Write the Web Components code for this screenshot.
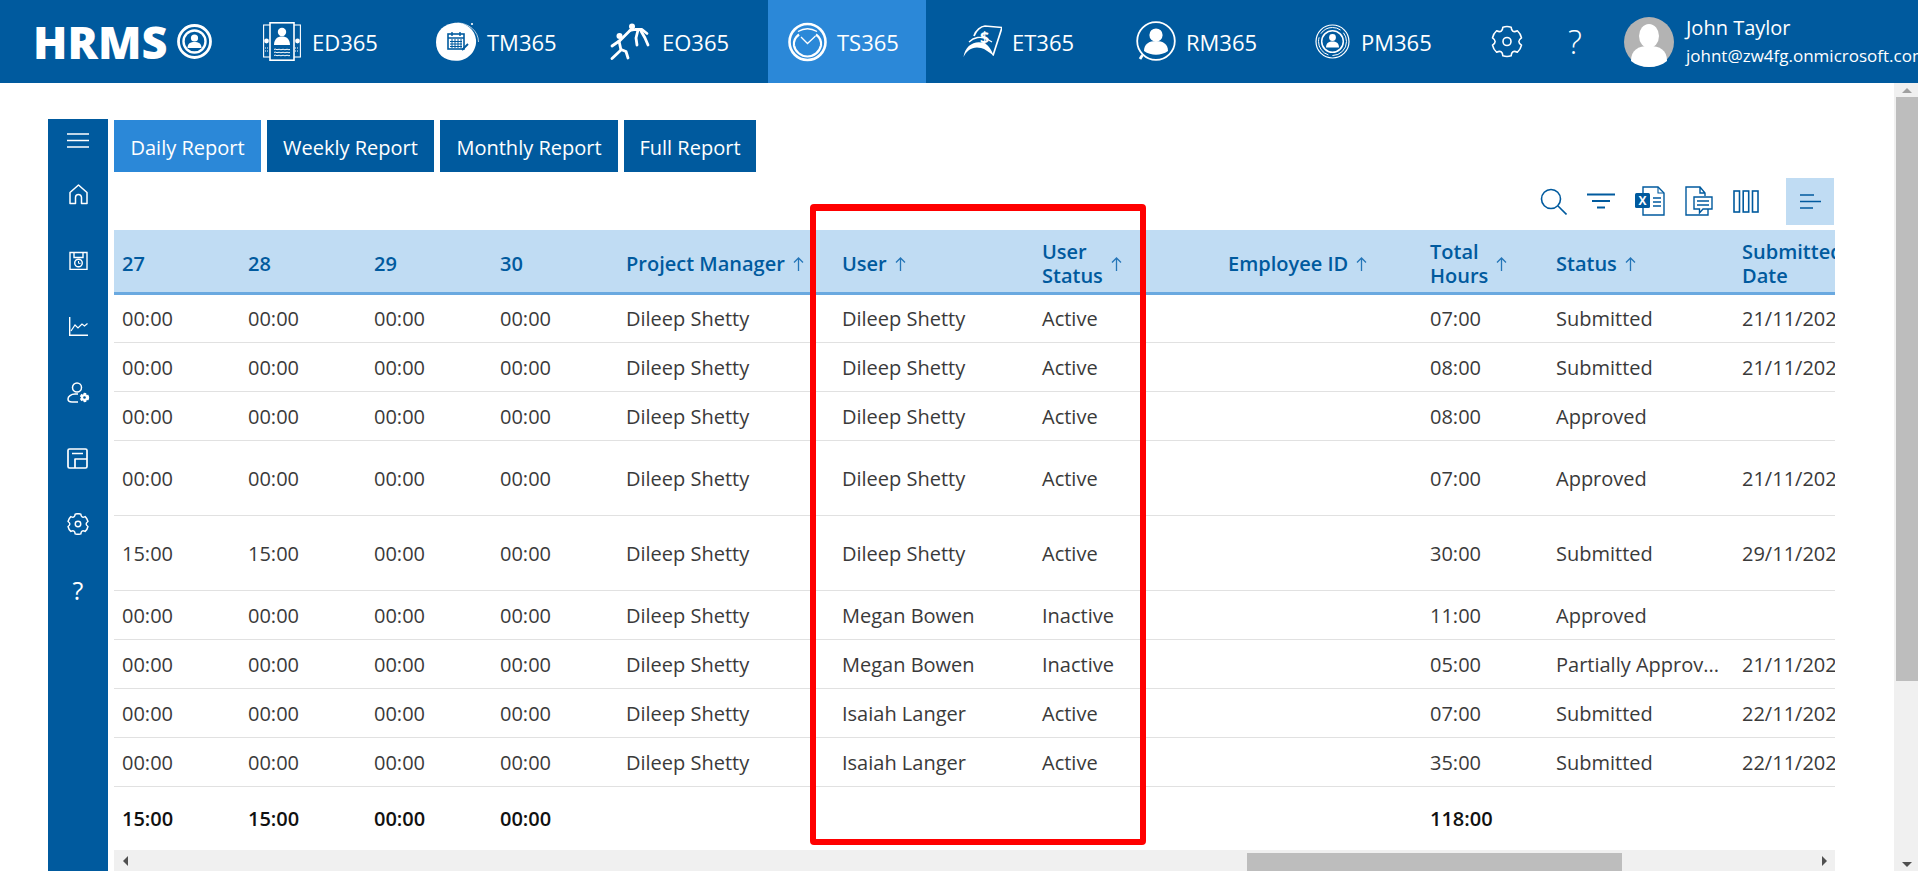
<!DOCTYPE html>
<html>
<head>
<meta charset="utf-8">
<title>HRMS TS365</title>
<style>
    html, body { margin: 0; height: 100%; overflow: hidden; background: #fff; font-family: "Open Sans", "Noto Sans", sans-serif; }
    body { display: flex; flex-direction: column; height: 871px; }
</style>
</head>
<body>
<hr-topbar></hr-topbar>
<hr-page></hr-page>

<script>
// six lobed cog, same outline in the top bar and in the rail
function gearPath() {
    const p = (deg, r) => {
        const a = deg * Math.PI / 180;
        return (12 + r * Math.cos(a)).toFixed(2) + ' ' + (12 + r * Math.sin(a)).toFixed(2);
    };
    let d = 'M' + p(-106, 11.2);
    for (let i = 0; i < 6; i++) {
        const a = i * 60 - 90;
        d += ' Q' + p(a, 11.8) + ' ' + p(a + 16, 11.2) + ' Q' + p(a + 30, 6.9) + ' ' + p(a + 44, 11.2);
    }
    return d + 'Z';
}
const gear = (size, sw) => `<svg width="${size}" height="${size}" viewBox="0 0 24 24" fill="none" stroke="#fff" stroke-width="${sw}" stroke-linejoin="round"><circle cx="12" cy="12" r="3"/><path d="${gearPath()}"/></svg>`;

const icons = {
    hrmsLogo: `<svg width="35" height="35" viewBox="0 0 35 35" fill="none" stroke="#fff"><circle cx="17.5" cy="17.5" r="16" stroke-width="2.8"/><circle cx="17.5" cy="17.5" r="11" stroke-width="2.4"/><circle cx="17.5" cy="14" r="3.6" fill="#fff" stroke="none"/><path d="M10.5 24c0-4.5 3-6 7-6s7 1.5 7 6z" fill="#fff" stroke="none"/></svg>`,
    ed: `<svg width="38" height="39" viewBox="0 0 38 39" fill="none" stroke="#fff"><rect x="0.6" y="3" width="36.8" height="32" stroke-width="1.1"/><circle cx="3.5" cy="19" r="2.4" fill="#fff" stroke="none"/><circle cx="34.5" cy="19" r="2.4" fill="#fff" stroke="none"/><path d="M2 26h4M2 29h4M32 26h4M32 29h4" stroke-width="1" stroke-dasharray="1 1"/><rect x="7" y="0.8" width="24" height="37.4" fill="#005a9e" stroke-width="1.6"/><circle cx="19" cy="10" r="4.2" fill="#fff" stroke="none"/><path d="M11 23c0-6 3.5-8.5 8-8.5s8 2.5 8 8.5z" fill="#fff" stroke="none"/><path d="M11 27.5c1.5-1.5 2.5 1 4 0s2.5 1 4 0 2.5 1 4 0 2.5 1 4 0M11 30.5c1.5-1.5 2.5 1 4 0s2.5 1 4 0 2.5 1 4 0 2.5 1 4 0M11 33.5c1.5-1.5 2.5 1 4 0s2.5 1 4 0 2.5 1 4 0 2.5 1 4 0" stroke-width="1"/></svg>`,
    tm: `<svg width="45" height="40" viewBox="0 0 45 40" fill="none"><path d="M20 .8c10-1 20 6 21 17s-8 21-20 21S1 32 1 20 10 2 20 .8z" fill="#fff"/><path d="M21 0c11 0 21 8 21 19" stroke="#fff" stroke-width=".7" transform="translate(1.5 1)"/><circle cx="37" cy="2" r="1.1" fill="#fff"/><g stroke="#005a9e"><rect x="13" y="12" width="16" height="15" stroke-width="1.6"/><path d="M13 16h16M17 10v4M25 10v4" stroke-width="1.4"/><path d="M15 19.5h12M15 22h12M15 24.5h12M17 17v9M20 17v9M23 17v9M26 17v9" stroke-width="1"/><path d="M27 28l6-6" stroke-width="1.8"/></g></svg>`,
    eo: `<svg width="41" height="37" viewBox="0 0 41 37" fill="none" stroke="#fff" stroke-width="2.8" stroke-linecap="round" stroke-linejoin="round"><circle cx="22" cy="3.5" r="3" fill="#fff" stroke="none"/><circle cx="9.5" cy="13" r="3" fill="#fff" stroke="none"/><path d="M20 7.5L10 17.5 2 23"/><path d="M9 18l2 9-9 8.5"/><path d="M11 26.5l5 2 2 6.5"/><path d="M20 7.5l5-1h7l5 4"/><path d="M28 7l-2 8 1 7"/><path d="M31 8l4 7 3 7"/></svg>`,
    ts: `<svg width="39" height="40" viewBox="0 0 39 40" fill="none" stroke="#fff"><circle cx="19.5" cy="20" r="18" stroke-width="2.6"/><path d="M11 12.5c-4 3-5.5 7-5 11 1 6 7 11 13.5 11s12-4.5 13.5-11c.5-4-1-8-5-11" stroke-width="2.2"/><path d="M10 9.5c6-3.5 13-3.5 19 0" stroke-width="1.4"/><path d="M13 15l6.5 6.5 8-7.5" stroke-width="1.3"/></svg>`,
    et: `<svg width="39" height="33" viewBox="0 0 39 33" fill="none" stroke="#fff"><path d="M11 11C13 5 18 1.5 22 1l17 1.5-9 28" stroke-width="1.7"/><text x="17" y="18" font-family="'Open Sans',sans-serif" font-size="16" font-weight="700" fill="#fff" stroke="none">$</text><path d="M.5 32C2 20 12 15 21 18c4 1.5 7 6 10 13-5-4-9-7-13-8-8-2-14 2-17.5 9z" fill="#fff" stroke="none"/><path d="M6 17c5-5 12-6 18-3l5 3" stroke-width="1.3"/></svg>`,
    rm: `<svg width="40" height="41" viewBox="0 0 40 41" fill="none" stroke="#fff"><circle cx="20" cy="20" r="18.8" stroke-width="1.8"/><circle cx="20" cy="14" r="6.6" fill="#fff" stroke="none"/><path d="M8 30c0-7 5-10 12-10s12 3 12 10c-7 5-17 5-24 0z" fill="#fff" stroke="none"/><path d="M6.5 34l-2.5 4" stroke-width="2.8"/></svg>`,
    pm: `<svg width="35" height="35" viewBox="0 0 35 35" fill="none" stroke="#fff"><circle cx="17.5" cy="17.5" r="16.5" stroke-width="1.2"/><circle cx="17.5" cy="17.5" r="14" stroke-width="1" stroke-dasharray="22 4"/><circle cx="17.5" cy="17.5" r="10.8" stroke-width="1.5"/><circle cx="17.5" cy="13.5" r="3.4" fill="#fff" stroke="none"/><path d="M11 23.5c0-4.5 3-6 6.5-6s6.5 1.5 6.5 6z" fill="#fff" stroke="none"/></svg>`,
    burger: `<svg width="22" height="15" viewBox="0 0 22 15" fill="none" stroke="#fff" stroke-width="1.3"><path d="M0 1h22M0 7.5h22M0 14h22"/></svg>`,
    home: `<svg width="19" height="21" viewBox="0 0 19 21" fill="none" stroke="#fff" stroke-width="1.5" stroke-linejoin="round"><path d="M1 19.5V8.5L9.5 1 18 8.5v11h-5.5v-6a3 3 0 0 0-6 0v6z"/></svg>`,
    report: `<svg width="19" height="19" viewBox="0 0 19 19" fill="none" stroke="#fff" stroke-width="1.4"><path d="M1 1.5h17v17H1z"/><path d="M5 1.5v5h9v-5"/><circle cx="9.5" cy="12" r="3.8"/><path d="M9.5 10v2.3h2" stroke-width="1"/></svg>`,
    chart: `<svg width="19" height="19" viewBox="0 0 19 19" fill="none" stroke="#fff" stroke-width="1.4"><path d="M.7 0v18.2H19"/><path d="M2 14l4-6 3 3 4-4 2.5 2 3-2.5" stroke-width="1.2"/></svg>`,
    userCog: `<svg width="23" height="21" viewBox="0 0 23 21" fill="none" stroke="#fff" stroke-width="1.5"><circle cx="10" cy="5.5" r="4.5"/><path d="M11 20H5c-2.5 0-4-1-4-3 0-2.5 3-5 7-5h3"/><circle cx="17.5" cy="15.5" r="3.6" fill="#fff" stroke="#fff" stroke-width="2.2" stroke-dasharray="2.5 1.4"/><circle cx="17.5" cy="15.5" r="1.3" fill="#005a9e" stroke="none"/></svg>`,
    panel: `<svg width="22" height="21" viewBox="0 0 22 21" fill="none" stroke="#fff" stroke-width="1.7" stroke-linejoin="round"><path d="M20 11V2.5A1.5 1.5 0 0 0 18.5 1H2.5A1.5 1.5 0 0 0 1 2.5v16A1.5 1.5 0 0 0 2.5 20h16a1.5 1.5 0 0 0 1.5-1.5V11H8v9M5 5.5h11"/></svg>`,
    search: `<svg width="27" height="27" viewBox="0 0 27 27" fill="none" stroke="#005a9e" stroke-width="1.6"><circle cx="11" cy="11" r="9.5"/><path d="M18 18l8.5 8.5"/></svg>`,
    filter: `<svg width="28" height="16" viewBox="0 0 28 16" fill="none" stroke="#005a9e" stroke-width="2"><path d="M0 1.5h28M5 8h18M10 14.5h8"/></svg>`,
    excel: `<svg width="30" height="30" viewBox="0 0 30 30" fill="none"><path d="M8 1h15l6 6v22H8z" fill="#fff" stroke="#005a9e" stroke-width="1.4"/><path d="M23 1v6h6" stroke="#005a9e" stroke-width="1.1"/><path d="M18 12h8M18 16h8M18 20h8" stroke="#005a9e" stroke-width="1.4"/><rect x="0" y="7" width="15" height="15" rx="1.5" fill="#005a9e"/><text x="3.4" y="19" font-family="'Open Sans',sans-serif" font-size="12" font-weight="700" fill="#fff">X</text></svg>`,
    comment: `<svg width="28" height="30" viewBox="0 0 28 30" fill="none" stroke="#005a9e" stroke-width="1.4"><path d="M14 29H1V1h14l5 6v3M15 1v6h5M23 23v6h-9"/><path d="M9 11h18v12h-9l-3.5 4v-4H9z" fill="#fff"/><path d="M12 15h12M12 19h12" stroke-width="1.6"/></svg>`,
    columns: `<svg width="26" height="23" viewBox="0 0 26 23" fill="none" stroke="#005a9e" stroke-width="1.6"><rect x="1" y="1" width="5.5" height="21"/><rect x="10.2" y="1" width="5.5" height="21"/><rect x="19.5" y="1" width="5.5" height="21"/></svg>`,
    align: `<svg width="21" height="15" viewBox="0 0 21 15" fill="none" stroke="#005a9e" stroke-width="1.4"><path d="M0 1h14M0 7.5h21M0 14h13"/></svg>`,
    avatar: `<svg width="50" height="50" viewBox="0 0 50 50"><circle cx="25" cy="25" r="25" fill="#b3b3b3"/><ellipse cx="25" cy="19" rx="10" ry="12" fill="#fff"/><path d="M7 44c0-11 7-15 18-15s18 4 18 15c-5 4-11 6-18 6s-13-2-18-6z" fill="#fff"/></svg>`,
    sort: `<svg width="11" height="14" viewBox="0 0 11 14" fill="none" stroke="#2576b8" stroke-width="1.3"><path d="M5.5 14V1M1 5.5L5.5 1 10 5.5"/></svg>`
};

// top bar
class HrTopbar extends HTMLElement {
    connectedCallback() {
        // icon, label, box width, offset of the label from the box start
        const mods = [
            ['ed', 'ED365', 172, 49], ['tm', 'TM365', 175, 52], ['eo', 'EO365', 158, 52],
            ['ts', 'TS365', 158, 49, true], ['et', 'ET365', 173, 49], ['rm', 'RM365', 179, 50], ['pm', 'PM365', 176, 46]
        ];
        this.attachShadow({ mode: 'open' }).innerHTML = `
            <style>
                :host { display: flex; align-items: stretch; height: 83px; background: #005a9e; color: #fff; flex: none; overflow: hidden; }
                .logo { display: flex; align-items: center; gap: 10px; padding-left: 33px; width: 263px; box-sizing: border-box; font: 800 45px/1 "Open Sans", sans-serif; flex: none; }
                a { display: flex; align-items: center; font-size: 22px; flex: none; box-sizing: border-box; }
                a.on { background: #2b88d8; padding-left: 20px; margin-right: 37px; }
                a b { display: flex; align-items: center; font-weight: 400; flex: none; }
                .tool { display: flex; align-items: center; justify-content: center; flex: none; }
                .user { display: flex; align-items: center; gap: 12px; margin-left: 42px; white-space: nowrap; flex: none; }
                .name { font-size: 20px; line-height: 28px; }
                .mail { font-size: 17px; line-height: 28px; }
            </style>
            <div class="logo">HRMS${icons.hrmsLogo}</div>
            ${mods.map(m => `<a class="${m[4] ? 'on' : ''}" style="width:${m[2]}px"><b style="width:${m[3]}px">${icons[m[0]]}</b><span>${m[1]}</span></a>`).join('')}
            <div class="tool" style="width:32px">${gear(33, 1.2)}</div>
            <div class="tool" style="width:14px;margin-left:45px;font-size:33px;font-weight:300">?</div>
            <div class="user">${icons.avatar}<div><div class="name">John Taylor</div><div class="mail">johnt@zw4fg.onmicrosoft.com</div></div></div>
        `;
    }
}
customElements.define('hr-topbar', HrTopbar);

// left blue rail
class HrRail extends HTMLElement {
    connectedCallback() {
        this.attachShadow({ mode: 'open' }).innerHTML = `
            <style>
                :host { display: flex; flex-direction: column; align-items: center; width: 60px; background: #005a9e; color: #fff; flex: none; }
                div { display: flex; align-items: center; justify-content: center; height: 66px; width: 100%; flex: none; }
                div.first { height: 42px; }
            </style>
            <div class="first">${icons.burger}</div><div>${icons.home}</div><div>${icons.report}</div><div>${icons.chart}</div>
            <div>${icons.userCog}</div><div>${icons.panel}</div>
            <div>${gear(22, 1.6)}</div>
            <div style="font-size:25px">?</div>
        `;
    }
}
customElements.define('hr-rail', HrRail);

// report tabs
class HrTabs extends HTMLElement {
    connectedCallback() {
        const tabs = [['Daily Report', 147], ['Weekly Report', 167], ['Monthly Report', 178], ['Full Report', 132]];
        this.attachShadow({ mode: 'open' }).innerHTML = `
            <style>
                :host { display: flex; gap: 6px; height: 52px; flex: none; }
                span { display: flex; align-items: center; justify-content: center; background: #005a9e; color: #fff; font-size: 20px; padding-top: 2px; box-sizing: border-box; }
                span.on { background: #2b88d8; }
            </style>
            ${tabs.map((t, i) => `<span class="${i ? '' : 'on'}" style="width:${t[1]}px">${t[0]}</span>`).join('')}
        `;
    }
}
customElements.define('hr-tabs', HrTabs);

class HrToolbar extends HTMLElement {
    connectedCallback() {
        this.attachShadow({ mode: 'open' }).innerHTML = `
            <style>
                :host { display: flex; align-items: center; justify-content: flex-end; height: 58px; flex: none; gap: 20px; }
                .on { width: 48px; height: 47px; background: #c0dcf3; display: flex; align-items: center; justify-content: center; margin-left: 7px; margin-right: 1px; }
            </style>
            ${icons.search}${icons.filter}${icons.excel}${icons.comment}${icons.columns}
            <div class="on">${icons.align}</div>
        `;
    }
}
customElements.define('hr-toolbar', HrToolbar);

// report grid
class HrGrid extends HTMLElement {
    connectedCallback() {
        const widths = [126, 126, 126, 126, 216, 200, 186, 202, 126, 186, 126];
        const heads = ['27', '28', '29', '30', 'Project Manager|', 'User|', 'User<br>Status|', 'Employee ID|', 'Total<br>Hours|', 'Status|', 'Submitted<br>Date'];
        const rows = [
            ['00:00', '00:00', 'Dileep Shetty', 'Active', '07:00', 'Submitted', '21/11/2024', 49],
            ['00:00', '00:00', 'Dileep Shetty', 'Active', '08:00', 'Submitted', '21/11/2024', 49],
            ['00:00', '00:00', 'Dileep Shetty', 'Active', '08:00', 'Approved', '', 49],
            ['00:00', '00:00', 'Dileep Shetty', 'Active', '07:00', 'Approved', '21/11/2024', 75],
            ['15:00', '15:00', 'Dileep Shetty', 'Active', '30:00', 'Submitted', '29/11/2024', 75],
            ['00:00', '00:00', 'Megan Bowen', 'Inactive', '11:00', 'Approved', '', 49],
            ['00:00', '00:00', 'Megan Bowen', 'Inactive', '05:00', 'Partially Approv...', '21/11/2024', 49],
            ['00:00', '00:00', 'Isaiah Langer', 'Active', '07:00', 'Submitted', '22/11/2024', 49],
            ['00:00', '00:00', 'Isaiah Langer', 'Active', '35:00', 'Submitted', '22/11/2024', 49]
        ];
        const head = heads.map(h => {
            const sort = h.endsWith('|');
            return `<th><div><span>${h.replace('|', '')}</span>${sort ? icons.sort : ''}</div></th>`;
        }).join('');
        const body = rows.map(r => `<tr style="height:${r[7]}px">
            <td>${r[0]}</td><td>${r[1]}</td><td>00:00</td><td>00:00</td><td>Dileep Shetty</td>
            <td>${r[2]}</td><td>${r[3]}</td><td></td><td>${r[4]}</td><td>${r[5]}</td><td>${r[6]}</td></tr>`).join('');
        this.attachShadow({ mode: 'open' }).innerHTML = `
            <style>
                :host { display: block; position: relative; overflow: hidden; flex: none; }
                table { border-collapse: collapse; table-layout: fixed; width: ${widths.reduce((a, b) => a + b)}px; font-size: 20px; color: #3a3a3a; }
                th { height: 63px; background: #c0dcf3; border-bottom: 3px solid #6aa9e0; color: #005a9e; font-weight: 600; font-size: 20px; line-height: 24px; text-align: left; padding: 7px 8px 0; box-sizing: border-box; }
                th div { display: flex; align-items: center; gap: 8px; white-space: nowrap; }
                td { padding: 1px 8px 0; border-bottom: 1px solid #e1e1e1; white-space: nowrap; overflow: hidden; box-sizing: border-box; }
                tr.sum td { font-weight: 600; color: #111; border: 0; height: 64px; }
            </style>
            <table>
                <colgroup>${widths.map(w => `<col style="width:${w}px">`).join('')}</colgroup>
                <thead><tr>${head}</tr></thead>
                <tbody>${body}
                    <tr class="sum"><td>15:00</td><td>15:00</td><td>00:00</td><td>00:00</td><td></td><td></td><td></td><td></td><td>118:00</td><td></td><td></td></tr>
                </tbody>
            </table>
        `;
    }
}
customElements.define('hr-grid', HrGrid);

class HrHscroll extends HTMLElement {
    connectedCallback() {
        this.attachShadow({ mode: 'open' }).innerHTML = `
            <style>
                :host { display: flex; align-items: stretch; height: 21px; background: #f0f0f0; flex: none; justify-content: space-between; }
                .arrow { width: 22px; display: flex; align-items: center; justify-content: center; }
                .track { flex: 1; display: flex; padding-left: 1111px; }
                .thumb { width: 375px; background: #bdbdbd; margin-top: 3px; }
                .l { width: 0; height: 0; border: 5px solid transparent; border-left: 0; border-right: 5px solid #505050; }
                .r { width: 0; height: 0; border: 5px solid transparent; border-right: 0; border-left: 5px solid #505050; }
            </style>
            <div class="arrow"><div class="l"></div></div>
            <div class="track"><div class="thumb"></div></div>
            <div class="arrow"><div class="r"></div></div>
        `;
    }
}
customElements.define('hr-hscroll', HrHscroll);

class HrVscroll extends HTMLElement {
    connectedCallback() {
        this.attachShadow({ mode: 'open' }).innerHTML = `
            <style>
                :host { display: flex; flex-direction: column; width: 24px; background: #f0f0f0; flex: none; }
                .arrow { height: 14px; display: flex; align-items: center; justify-content: center; padding-left: 2px; }
                .thumb { height: 584px; background: #bdbdbd; margin: 0 0 0 2px; }
                .sp { flex: 1; }
                .u { width: 0; height: 0; border: 5px solid transparent; border-top: 0; border-bottom: 5px solid #a0a0a0; }
                .d { width: 0; height: 0; border: 5px solid transparent; border-bottom: 0; border-top: 5px solid #505050; }
            </style>
            <div class="arrow"><div class="u"></div></div>
            <div class="thumb"></div>
            <div class="sp"></div>
            <div class="arrow"><div class="d"></div></div>
        `;
    }
}
customElements.define('hr-vscroll', HrVscroll);

class HrPage extends HTMLElement {
    connectedCallback() {
        this.attachShadow({ mode: 'open' }).innerHTML = `
            <style>
                :host { display: flex; flex: 1; min-height: 0; position: relative; background: #fff; }
                .main { flex: 1; min-width: 0; display: flex; padding: 36px 59px 0 48px; gap: 6px; overflow: hidden; }
                .content { flex: 1; min-width: 0; display: flex; flex-direction: column; padding-top: 1px; }
                .spacer { flex: 1; }
                .mark { position: absolute; left: 810px; top: 121px; width: 336px; height: 641px; box-sizing: border-box; border: 6px solid #ff0000; border-top-width: 7px; border-radius: 4px; }
            </style>
            <div class="main">
                <hr-rail></hr-rail>
                <div class="content">
                    <hr-tabs></hr-tabs>
                    <hr-toolbar></hr-toolbar>
                    <hr-grid></hr-grid>
                    <div class="spacer"></div>
                    <hr-hscroll></hr-hscroll>
                </div>
            </div>
            <hr-vscroll></hr-vscroll>
            <div class="mark"></div>
        `;
    }
}
customElements.define('hr-page', HrPage);
</script>
</body>
</html>
